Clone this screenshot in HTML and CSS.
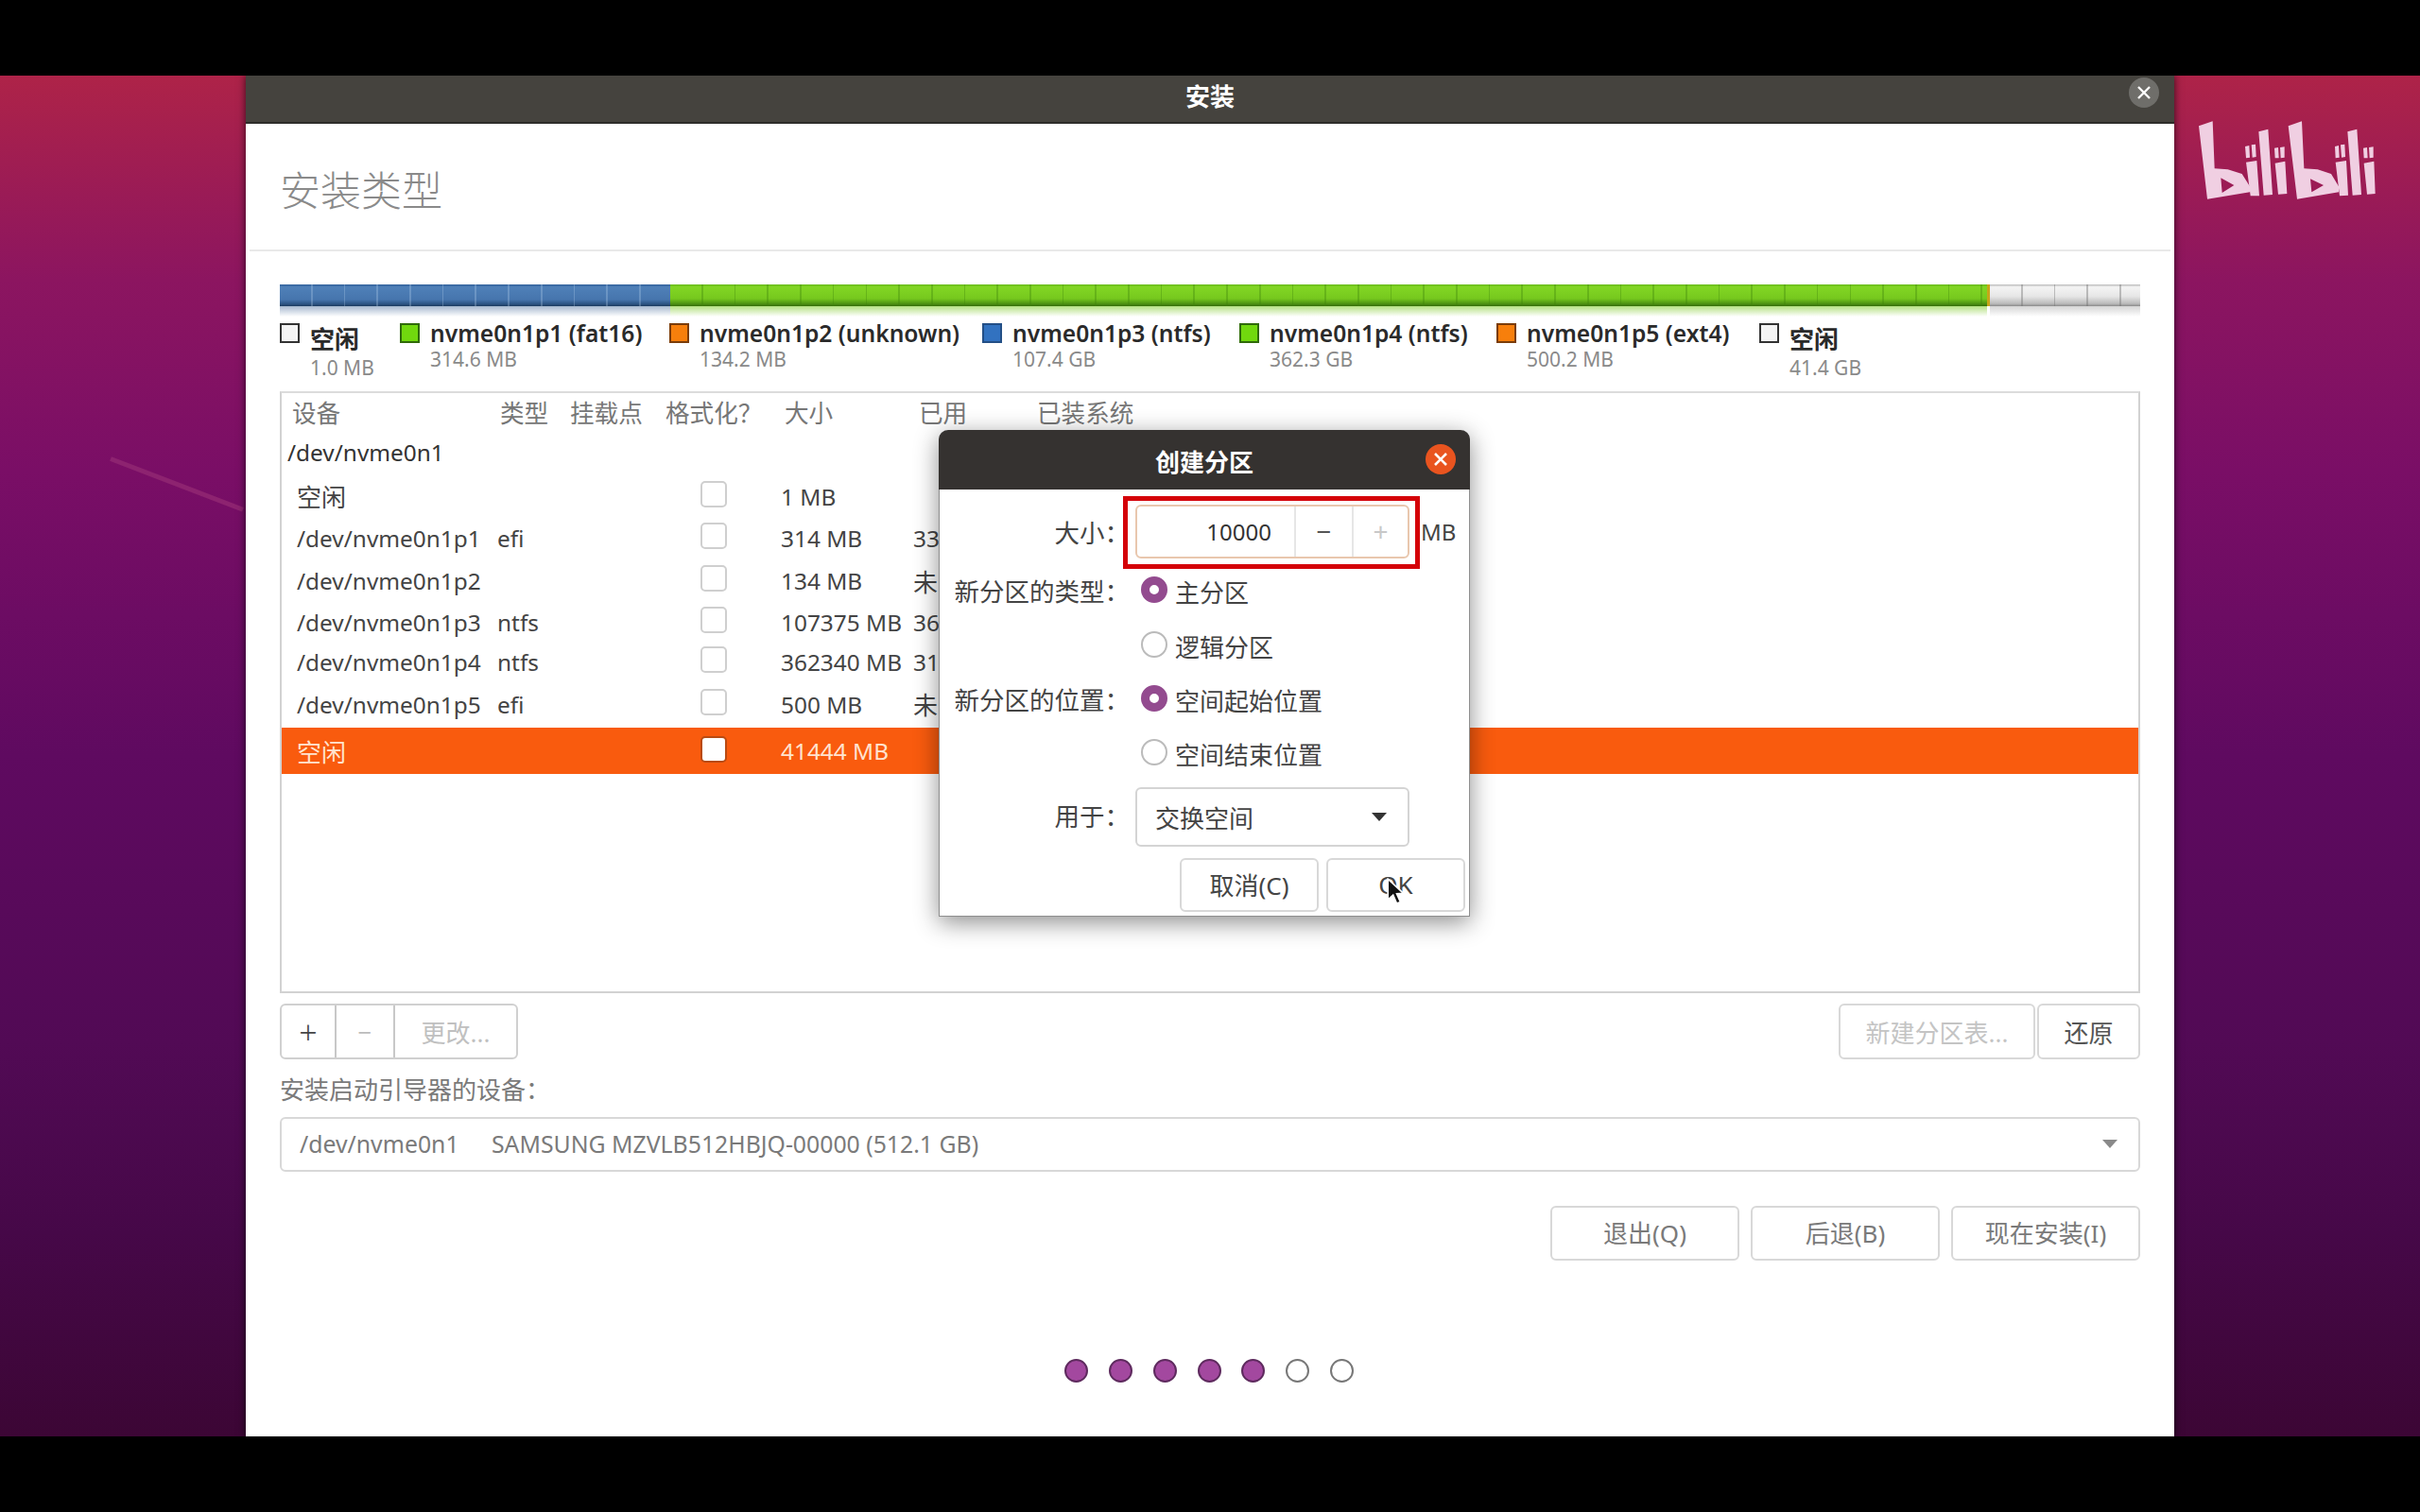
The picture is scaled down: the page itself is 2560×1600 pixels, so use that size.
FILE: index.html
```html
<!DOCTYPE html>
<html lang="zh-CN">
  <head>
    <meta charset="utf-8">
    <title>安装</title>
    <link rel="stylesheet" href="styles.css">
  </head>
  <body>
    <div class="stage">
      <div class="streak"></div>

      <div class="window">
        <div class="titlebar">
          <span></span>
          <span class="titlebar-text">安装</span>
          <span class="win-close">
            <svg viewBox="0 0 32 32" width="32" height="32"><path d="M10 10 22 22M22 10 10 22" stroke="#fff" stroke-width="2.4" fill="none"/></svg>
          </span>
        </div>

        <div class="page-head">安装类型</div>

        <div class="content">
          <div class="disk-bar">
            <div class="seg seg-blue"></div>
            <div class="seg seg-green"></div>
            <div class="seg seg-sliver"></div>
            <div class="seg seg-free"></div>
          </div>

          <div class="legend">
            <div class="legend-item legend-free">
              <i class="swatch sw-free"></i>
              <div><div class="legend-name">空闲</div><div class="legend-size">1.0 MB</div></div>
            </div>
            <div class="legend-item">
              <i class="swatch sw-green"></i>
              <div><div class="legend-name">nvme0n1p1 (fat16)</div><div class="legend-size">314.6 MB</div></div>
            </div>
            <div class="legend-item">
              <i class="swatch sw-orange"></i>
              <div><div class="legend-name">nvme0n1p2 (unknown)</div><div class="legend-size">134.2 MB</div></div>
            </div>
            <div class="legend-item">
              <i class="swatch sw-blue"></i>
              <div><div class="legend-name">nvme0n1p3 (ntfs)</div><div class="legend-size">107.4 GB</div></div>
            </div>
            <div class="legend-item">
              <i class="swatch sw-green"></i>
              <div><div class="legend-name">nvme0n1p4 (ntfs)</div><div class="legend-size">362.3 GB</div></div>
            </div>
            <div class="legend-item">
              <i class="swatch sw-orange"></i>
              <div><div class="legend-name">nvme0n1p5 (ext4)</div><div class="legend-size">500.2 MB</div></div>
            </div>
            <div class="legend-item legend-free">
              <i class="swatch sw-free"></i>
              <div><div class="legend-name">空闲</div><div class="legend-size">41.4 GB</div></div>
            </div>
          </div>

          <div class="ptable">
            <div class="phead">
              <span>设备</span><span>类型</span><span>挂载点</span><span>格式化<span class="punct">？</span></span><span>大小</span><span>已用</span><span>已装系统</span>
            </div>
            <div class="pdisk">/dev/nvme0n1</div>
            <div class="prow"><span class="cjk">空闲</span><span></span><span></span><i class="check"></i><span>1 MB</span><span></span></div>
            <div class="prow"><span>/dev/nvme0n1p1</span><span>efi</span><span></span><i class="check"></i><span>314 MB</span><span>33</span></div>
            <div class="prow"><span>/dev/nvme0n1p2</span><span></span><span></span><i class="check"></i><span>134 MB</span><span class="cjk">未</span></div>
            <div class="prow"><span>/dev/nvme0n1p3</span><span>ntfs</span><span></span><i class="check"></i><span>107375 MB</span><span>36</span></div>
            <div class="prow"><span>/dev/nvme0n1p4</span><span>ntfs</span><span></span><i class="check"></i><span>362340 MB</span><span>31</span></div>
            <div class="prow"><span>/dev/nvme0n1p5</span><span>efi</span><span></span><i class="check"></i><span>500 MB</span><span class="cjk">未</span></div>
            <div class="prow selected"><span class="cjk">空闲</span><span></span><span></span><i class="check"></i><span>41444 MB</span><span></span></div>
          </div>

          <div class="toolbar">
            <div class="btn-group">
              <span class="tb-btn tb-add">+</span>
              <span class="tb-btn tb-del">−</span>
              <span class="tb-btn tb-edit">更改...</span>
            </div>
            <div class="toolbar-right">
              <span class="btn btn-newtable">新建分区表...</span>
              <span class="btn btn-revert">还原</span>
            </div>
          </div>

          <div class="boot-label">安装启动引导器的设备<span class="punct">：</span></div>
          <div class="boot-combo">
            <span class="boot-dev">/dev/nvme0n1</span>
            <span class="boot-name">SAMSUNG MZVLB512HBJQ-00000 (512.1 GB)</span>
            <i class="arrow arrow-gray"></i>
          </div>

          <div class="nav-buttons">
            <span class="btn btn-nav">退出(Q)</span>
            <span class="btn btn-nav">后退(B)</span>
            <span class="btn btn-nav">现在安装(I)</span>
          </div>

          <div class="pager">
            <i class="dot on"></i><i class="dot on"></i><i class="dot on"></i><i class="dot on"></i><i class="dot on"></i><i class="dot"></i><i class="dot"></i>
          </div>
        </div>

        <!-- create partition dialog -->
        <div class="dialog">
          <div class="dialog-title">
            <span></span>
            <span class="dialog-title-text">创建分区</span>
            <span class="dialog-close">
              <svg viewBox="0 0 32 32" width="32" height="32"><path d="M10 10 22 22M22 10 10 22" stroke="#fff" stroke-width="2.6" fill="none"/></svg>
            </span>
          </div>
          <div class="dialog-form">
            <div class="f-label f-label-top">大小<span class="punct">：</span></div>
            <div class="size-row">
              <div class="spin">
                <span class="spin-value">10000</span>
                <span class="spin-btn">−</span>
                <span class="spin-btn spin-off">+</span>
              </div>
              <span class="unit">MB</span>
            </div>

            <div class="f-label">新分区的类型<span class="punct">：</span></div>
            <div class="radio-line"><i class="radio on"></i>主分区</div>
            <div></div>
            <div class="radio-line"><i class="radio"></i>逻辑分区</div>

            <div class="f-label">新分区的位置<span class="punct">：</span></div>
            <div class="radio-line"><i class="radio on"></i>空间起始位置</div>
            <div></div>
            <div class="radio-line"><i class="radio"></i>空间结束位置</div>

            <div class="f-label f-label-end">用于<span class="punct">：</span></div>
            <div class="use-combo">交换空间<i class="arrow"></i></div>
          </div>
          <div class="dialog-actions">
            <span class="btn btn-dlg">取消(C)</span>
            <span class="btn btn-dlg">OK</span>
          </div>
          <div class="red-box"></div>
          <svg class="cursor" viewBox="0 0 20 28" width="22" height="31"><path d="M2 1v20l5-4.500 3.500 8 3.500-1.500-3.500-7.800 6.500-.5z" fill="#111" stroke="#fff" stroke-width="1.500"/></svg>
        </div>
      </div>

      <!-- bilibili logo -->
      <svg class="logo" viewBox="0 0 720 360" width="240" height="120">
        <g fill="#f0cfe2" fill-rule="evenodd">
          <path d="M78 70 122 55 128 205 170 208 215 222 240 262V280L105 302ZM148 235 152 282 190 258Z"/>
          <path d="M225 135 238 132 240 170 228 172ZM245 130 258 128 260 168 248 170ZM228 185 262 180 270 292 242 292ZM268 88 298 80 312 288 284 290ZM318 140 330 138 332 172 320 172ZM336 138 350 136 350 170 338 172ZM320 188 352 182 358 285 330 287Z"/>
          <path d="M362 70 405 55 412 205 455 208 498 222 522 262V280L390 302ZM432 238 436 280 474 258Z"/>
          <path d="M510 135 522 132 524 170 512 172ZM528 130 541 128 543 168 531 170ZM512 185 546 180 552 290 525 292ZM550 88 580 80 594 288 566 290ZM600 140 612 138 614 172 602 172ZM618 138 632 136 632 170 620 172ZM602 188 634 182 638 285 612 287Z"/>
        </g>
      </svg>
    </div>
  </body>
</html>
```

FILE: styles.css
```css
* {
  box-sizing: border-box;
}
body {
  margin: 0;
  background: #000;
  padding: 80px 0;
  font-family: "Noto Sans", "Noto Sans CJK SC", sans-serif;
  font-size: 24px;
  color: #444;
}
i {
  display: block;
}
.punct {
  font-family: "Noto Sans CJK TC", sans-serif;
}
.cjk {
  font-size: 26px;
}

/* wallpaper */
.stage {
  position: relative;
  height: 1440px;
  display: flex;
  justify-content: center;
  background: linear-gradient(180deg, #ae2348 0%, #8c1560 15%, #7a0e66 29%, #5f0a60 50%, #520a55 71%, #460848 85%, #3c0635 100%);
}
.streak {
  position: absolute;
  left: 117px;
  top: 403px;
  width: 150px;
  height: 5px;
  background: #8d2370;
  transform: rotate(21deg);
  transform-origin: left center;
}
.logo {
  position: absolute;
  left: 2300px;
  top: 30px;
}

/* main window */
.window {
  position: relative;
  width: 2040px;
  background: #fff;
  display: flex;
  flex-direction: column;
  box-shadow: 0 0 8px rgba(0, 0, 0, 0.7);
}
.titlebar {
  height: 51px;
  flex: none;
  background: #45433e;
  border-bottom: 2px solid #2e2d2a;
  display: grid;
  grid-template-columns: 1fr auto 1fr;
}
.titlebar-text {
  color: #fff;
  font-size: 26px;
  font-weight: 700;
  line-height: 44px;
}
.win-close {
  justify-self: end;
  width: 32px;
  height: 32px;
  margin: 2px 16px 0 0;
  border-radius: 50%;
  background: #6f6e6a;
}
.win-close svg,
.dialog-close svg {
  display: block;
}
.page-head {
  height: 135px;
  flex: none;
  margin: 0 4px;
  padding-left: 32px;
  border-bottom: 2px solid #e9e9e9;
  font-size: 43px;
  line-height: 142px;
  font-weight: 300;
  color: #8a8a8a;
}
.content {
  padding: 0 36px;
}

/* disk usage bar */
.disk-bar {
  display: flex;
  height: 34px;
  margin-top: 35px;
}
.seg {
  height: 34px;
  background-repeat: no-repeat;
  background-size: 100% 23px, 100% 23px, 100% 11px;
  background-position: 0 0, 0 0, 0 23px;
}
.seg-blue {
  width: 413px;
  background-image:
    repeating-linear-gradient(90deg, transparent 0 33px, rgba(190, 215, 240, 0.28) 33px 34.7px),
    linear-gradient(180deg, #2f5f99 0, #4f80b8 12%, #4675ad 70%, #2c5482 90%, #1b3a5e 100%),
    linear-gradient(180deg, rgba(60, 100, 150, 0.45), rgba(60, 100, 150, 0));
}
.seg-green {
  width: 1393px;
  background-image:
    repeating-linear-gradient(90deg, transparent 0 33px, rgba(60, 130, 10, 0.35) 33px 34.7px),
    linear-gradient(180deg, #67b81a 0, #82d624 12%, #76c81e 65%, #4e9413 88%, #356d0a 100%),
    linear-gradient(180deg, rgba(120, 200, 30, 0.55), rgba(120, 200, 30, 0));
}
.seg-sliver {
  width: 3px;
  background-image: linear-gradient(#c8a61a, #c8a61a), linear-gradient(#c8a61a, #c8a61a), linear-gradient(transparent, transparent);
}
.seg-free {
  flex: 1;
  background-image:
    repeating-linear-gradient(90deg, transparent 0 33px, rgba(110, 110, 110, 0.4) 33px 34.7px),
    linear-gradient(180deg, #b9b9b9 0, #f4f4f4 12%, #e6e6e6 55%, #bbb 88%, #8a8a8a 100%),
    linear-gradient(180deg, rgba(150, 150, 150, 0.4), rgba(150, 150, 150, 0));
}

/* legend */
.legend {
  display: grid;
  grid-template-columns: 127px 285px 331px 272px 272px 278px 1fr;
  height: 74px;
  margin-top: 5px;
}
.legend-item {
  display: flex;
  gap: 11px;
}
.swatch {
  flex: none;
  width: 21px;
  height: 21px;
  margin-top: 2px;
  border: 2px solid #222;
}
.sw-free {
  border-color: #333;
  background: #f4f4f4;
}
.sw-green {
  border-color: #2f6a08;
  background: #71d90e;
}
.sw-orange {
  border-color: #7a3c08;
  background: #f77f0c;
}
.sw-blue {
  border-color: #234f86;
  background: #3272c0;
}
.legend-free > div {
  padding-top: 6px;
}
.legend-name {
  font-size: 24.6px;
  line-height: 26px;
  font-weight: 600;
  color: #2a2a2a;
  white-space: nowrap;
}
.legend-free .legend-name {
  font-size: 26px;
}
.legend-size {
  font-size: 21px;
  line-height: 29px;
  color: #8a8a8a;
}
.legend-free .legend-size {
  line-height: 34px;
}

/* partition table */
.ptable {
  height: 637px;
  border: 2px solid #d2d2d2;
  border-top-color: #dcdcdc;
  display: grid;
  grid-template-rows: 44px 43px 44px 45px 45px 43px 40px 50px 49px 1fr;
  font-size: 24.4px;
}
.phead {
  display: grid;
  grid-template-columns: 231px 74px 101px 126px 142px 125px 1fr;
  align-items: center;
  padding-bottom: 5px;
  font-size: 25.6px;
  color: #777;
}
.phead > span {
  padding-left: 11px;
}
.phead > span + span {
  padding-left: 0;
}
.pdisk {
  padding-left: 6px;
  line-height: 37px;
  color: #333;
}
.prow {
  display: grid;
  grid-template-columns: 212px 77px 101px 122px 140px 1fr;
  align-items: center;
  padding-left: 16px;
  white-space: nowrap;
}
.check {
  width: 28px;
  height: 28px;
  margin: 0 0 5px 37px;
  border: 2px solid #cfcfcf;
  border-radius: 5px;
  background: #fff;
}
.prow.selected {
  background: #f95b0e;
  color: #ffe4d0;
}
.prow.selected .check {
  margin-bottom: 3px;
  border-color: #b94a12;
}

/* toolbar under the table */
.toolbar {
  display: flex;
  justify-content: space-between;
  margin-top: 11px;
  height: 59px;
}
.btn-group {
  display: flex;
  border: 2px solid #d0d0d0;
  border-radius: 6px;
}
.tb-btn {
  display: flex;
  align-items: center;
  justify-content: center;
  border-right: 2px solid #c8c8c8;
}
.tb-add {
  width: 58px;
  font-size: 34px;
  font-weight: 300;
  color: #444;
}
.tb-del {
  width: 62px;
  font-size: 26px;
  color: #bbb;
}
.tb-edit {
  width: 128px;
  border-right: 0;
  font-size: 26px;
  color: #c0c0c0;
}
.toolbar-right {
  display: flex;
  gap: 2px;
}
.btn {
  display: flex;
  align-items: center;
  justify-content: center;
  border: 2px solid #d8d8d8;
  border-radius: 6px;
  background: #fff;
  font-size: 26px;
  white-space: nowrap;
}
.btn-newtable {
  width: 208px;
  color: #c4c4c4;
}
.btn-revert {
  width: 109px;
  color: #555;
}

/* boot loader device */
.boot-label {
  margin-top: 16px;
  font-size: 26px;
  line-height: 30px;
  color: #7a7a7a;
}
.boot-combo {
  display: flex;
  align-items: center;
  height: 58px;
  margin-top: 14px;
  padding: 0 22px 2px 19px;
  border: 2px solid #d8d8d8;
  border-radius: 6px;
  font-size: 24.8px;
  color: #7a7a7a;
}
.boot-dev {
  width: 203px;
}
.boot-name {
  flex: 1;
}
.arrow {
  flex: none;
  width: 0;
  height: 0;
  border-left: 8px solid transparent;
  border-right: 8px solid transparent;
  border-top: 9px solid #333;
}
.arrow-gray {
  border-top-color: #8a8a8a;
}
.nav-buttons {
  display: flex;
  justify-content: flex-end;
  gap: 12px;
  margin-top: 36px;
}
.btn-nav {
  width: 200px;
  height: 58px;
  padding-bottom: 2px;
  color: #7a7a7a;
}

/* step dots */
.pager {
  display: flex;
  justify-content: center;
  gap: 21.7px;
  margin-top: 104px;
  padding-right: 2px;
}
.dot {
  width: 25px;
  height: 25px;
  border-radius: 50%;
  border: 2px solid #777;
  background: #fff;
}
.dot.on {
  border-color: #5e2a5e;
  background: #a3489f;
}

/* dialog */
.dialog {
  position: absolute;
  left: 733px;
  top: 375px;
  width: 562px;
  height: 515px;
  background: #fff;
  border: 1px solid #8e8e8e;
  border-top: 0;
  border-radius: 10px 10px 0 0;
  box-shadow: 0 6px 26px rgba(0, 0, 0, 0.45);
}
.dialog-title {
  height: 63px;
  margin: 0 -1px;
  background: #353230;
  border-radius: 10px 10px 0 0;
  display: grid;
  grid-template-columns: 1fr auto 1fr;
}
.dialog-title-text {
  color: #fff;
  font-size: 26px;
  font-weight: 700;
  line-height: 69px;
}
.dialog-close {
  justify-self: end;
  width: 32px;
  height: 32px;
  margin: 15px 15px 0 0;
  border-radius: 50%;
  background: #e9541f;
}
.dialog-form {
  display: grid;
  grid-template-columns: 207px 1fr;
  grid-template-rows: 63px 58px 58px 56px 58px 69px;
  margin-top: 16px;
  align-items: center;
}
.f-label {
  text-align: right;
  padding-right: 6px;
  margin-top: -4px;
  font-size: 26.5px;
  color: #444;
}
.f-label-top {
  align-self: start;
  margin-top: 0;
  line-height: 57px;
}
.f-label-end {
  align-self: end;
  margin-top: 0;
  line-height: 63px;
}
.size-row {
  display: flex;
  align-self: start;
  gap: 12px;
  align-items: center;
  height: 57px;
}
.spin {
  display: grid;
  grid-template-columns: 166px 61px 1fr;
  width: 290px;
  height: 57px;
  border: 2px solid #e9c7ae;
  border-radius: 6px;
}
.spin-value {
  padding-right: 24px;
  text-align: right;
  line-height: 53px;
  color: #333;
}
.spin-btn {
  border-left: 2px solid #e6e6e6;
  text-align: center;
  font-size: 28px;
  line-height: 53px;
  color: #555;
}
.spin-off {
  color: #c8c8c8;
}
.unit {
  color: #444;
}
.radio-line {
  display: flex;
  align-items: center;
  gap: 8px;
  padding-left: 6px;
  font-size: 26px;
  color: #444;
}
.radio {
  flex: none;
  width: 28px;
  height: 28px;
  margin-top: -4px;
  border-radius: 50%;
  border: 2px solid #bbb;
  background: #fff;
}
.radio.on {
  border: 9px solid #934b8f;
}
.use-combo {
  display: flex;
  align-items: center;
  justify-content: space-between;
  align-self: end;
  width: 290px;
  height: 63px;
  padding: 0 22px 0 19px;
  border: 2px solid #d4d4d4;
  border-radius: 6px;
  font-size: 26px;
  color: #444;
}
.dialog-actions {
  display: flex;
  justify-content: flex-end;
  gap: 8px;
  margin-top: 12px;
  padding-right: 4px;
}
.btn-dlg {
  width: 147px;
  height: 57px;
  padding-bottom: 2px;
  color: #444;
}
.red-box {
  position: absolute;
  left: 194px;
  top: 70px;
  width: 314px;
  height: 77px;
  border: 5px solid #d40008;
}
.cursor {
  position: absolute;
  left: 472px;
  top: 474px;
}
```
